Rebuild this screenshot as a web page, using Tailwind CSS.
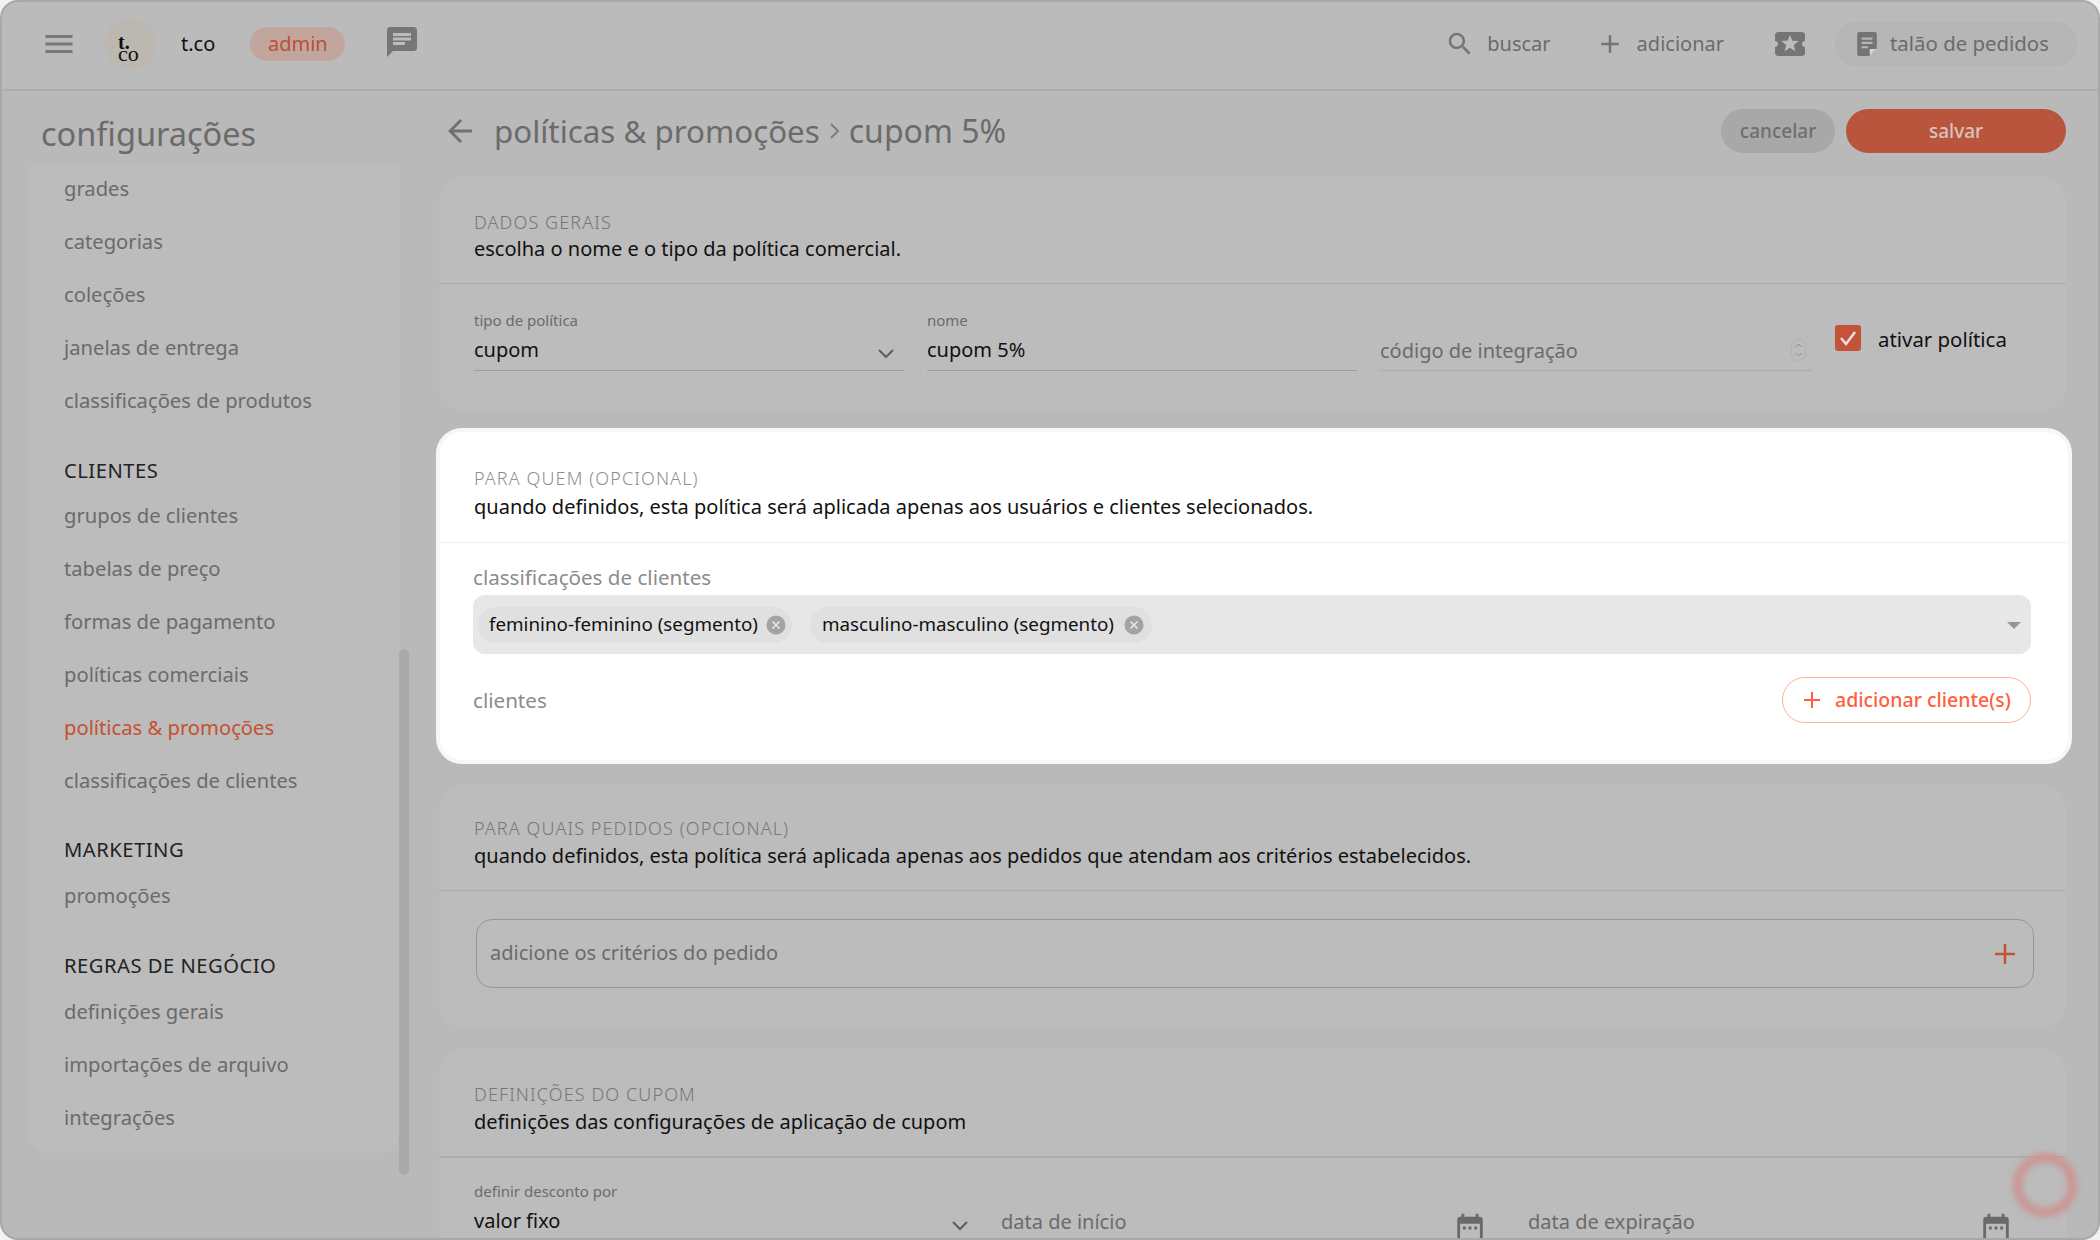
<!DOCTYPE html>
<html lang="pt">
<head>
<meta charset="UTF-8">
<title>políticas & promoções</title>
<script src="https://cdn.jsdelivr.net/npm/@tailwindcss/browser@4"></script>
</head>
<body class="bg-[#f2f2f2] font-['Noto_Sans',sans-serif]">
<div class="relative w-[2100px] h-[1240px] overflow-hidden rounded-[18px] border-2 border-[#a8a8a8] bg-[#b9b9b9] text-[20px] text-[#6b6b6b]">

  <!-- Header -->
  <header class="flex items-center h-[89px] border-b-2 border-[#adadad] bg-[#bbbbbb] pl-[42px] pr-[20px] pb-[4px]">
    <svg class="w-[36px] h-[36px] -ml-[3px] fill-[#787878]" viewBox="0 0 24 24"><path d="M3 18h18v-2H3v2zm0-5h18v-2H3v2zm0-7v2h18V6H3z"/></svg>
    <svg class="ml-[28px] w-[52px] h-[52px]" viewBox="0 0 52 52" font-family="Liberation Serif, serif" fill="#111">
      <circle cx="26" cy="26" r="26" fill="#bdb7b1"/>
      <text x="13" y="31" font-size="20" font-weight="700">t.</text>
      <text x="13" y="43" font-size="22">co</text>
    </svg>
    <span class="ml-[24px] text-[#111]">t.co</span>
    <span class="ml-[35px] flex items-center justify-center w-[95px] h-[34px] rounded-full bg-[#c2a69e] text-[#bd4f35]">admin</span>
    <svg class="ml-[39px] -mt-[4px] w-[36px] h-[36px] fill-[#767676]" viewBox="0 0 24 24"><path d="M20 2H4c-1.1 0-2 .9-2 2v18l4-4h14c1.1 0 2-.9 2-2V4c0-1.1-.9-2-2-2zM6 9h12v2H6V9zm8 5H6v-2h8v2zm4-6H6V6h12v2z"/></svg>

    <div class="ml-auto flex items-center">
      <svg class="w-[30px] h-[30px] fill-[#747474]" viewBox="0 0 24 24"><path d="M15.5 14h-.79l-.28-.27C15.41 12.59 16 11.11 16 9.5 16 5.91 13.09 3 9.5 3S3 5.91 3 9.5 5.91 16 9.5 16c1.61 0 3.09-.59 4.23-1.57l.27.28v.79l5 4.99L20.49 19l-4.99-5zm-6 0C7.01 14 5 11.99 5 9.5S7.01 5 9.5 5 14 7.01 14 9.5 11.99 14 9.5 14z"/></svg>
      <span class="ml-[12px]">buscar</span>
      <svg class="ml-[44px] w-[30px] h-[30px] fill-[#747474]" viewBox="0 0 24 24"><path d="M19 13h-6v6h-2v-6H5v-2h6V5h2v6h6v2z"/></svg>
      <span class="ml-[12px]">adicionar</span>
      <svg class="ml-[48px] w-[36px] h-[36px] fill-[#757575]" viewBox="0 0 24 24"><path d="M20 12c0-1.1.9-2 2-2V6c0-1.1-.9-2-2-2H4c-1.1 0-1.99.9-1.99 2v4c1.1 0 1.99.9 1.99 2s-.89 2-2 2v4c0 1.1.9 2 2 2h16c1.1 0 2-.9 2-2v-4c-1.1 0-2-.9-2-2zm-4.42 4.8L12 14.5l-3.58 2.3 1.08-4.12-3.29-2.69 4.24-.25L12 5.8l1.54 3.95 4.24.25-3.29 2.69 1.09 4.11z"/></svg>
      <div class="ml-[27px] flex items-center w-[243px] h-[46px] rounded-full bg-[#b6b6b6] pl-[20px]">
        <svg class="w-[24px] h-[24px] fill-[#747474]" viewBox="0 0 18 22"><path fill-rule="evenodd" d="M2 0h14a2 2 0 0 1 2 2v13l-7 7H2a2 2 0 0 1-2-2V2a2 2 0 0 1 2-2zm2 5v2h10V5H4zm0 4v2h10V9H4zm0 4v2h6v-2H4z"/><polygon points="11.5,21.5 11.5,15.5 17.5,15.5" fill="#d4d4d4"/></svg>
        <span class="ml-[11px] text-[20.4px]">talão de pedidos</span>
      </div>
    </div>
  </header>

  <div class="flex">
    <!-- Sidebar -->
    <aside class="relative w-[437px] shrink-0 pl-[27px]">
      <h1 class="h-[75px] pl-[12px] pt-[20px] text-[32.5px] leading-[46px]">configurações</h1>
      <nav class="w-[370px] h-[987px] overflow-hidden rounded-b-[18px] bg-[#bcbcbc] pl-[35px] text-[20.2px]">
        <ul class="-mt-[4px]">
          <li class="h-[53px] flex items-center">grades</li>
          <li class="h-[53px] flex items-center">categorias</li>
          <li class="h-[53px] flex items-center">coleções</li>
          <li class="h-[53px] flex items-center">janelas de entrega</li>
          <li class="h-[53px] flex items-center">classificações de produtos</li>
          <li class="h-[62px] pt-[31px] leading-[24px] tracking-[0.5px] text-[#222]">CLIENTES</li>
          <li class="h-[53px] flex items-center">grupos de clientes</li>
          <li class="h-[53px] flex items-center">tabelas de preço</li>
          <li class="h-[53px] flex items-center">formas de pagamento</li>
          <li class="h-[53px] flex items-center">políticas comerciais</li>
          <li class="h-[53px] flex items-center text-[#c4512f]">políticas & promoções</li>
          <li class="h-[53px] flex items-center">classificações de clientes</li>
          <li class="h-[62px] pt-[30px] leading-[24px] tracking-[0.5px] text-[#222]">MARKETING</li>
          <li class="h-[53px] flex items-center">promoções</li>
          <li class="h-[63px] pt-[31px] leading-[24px] tracking-[0.5px] text-[#222]">REGRAS DE NEGÓCIO</li>
          <li class="h-[53px] flex items-center">definições gerais</li>
          <li class="h-[53px] flex items-center">importações de arquivo</li>
          <li class="h-[53px] flex items-center">integrações</li>
        </ul>
      </nav>
      <div class="absolute left-[397px] top-[558px] w-[10px] h-[526px] rounded-full bg-[#a9a9a9]"></div>
    </aside>

    <!-- Main -->
    <main class="w-[1627px] shrink-0">
      <div class="flex items-center h-[44px] mt-[18px] mb-[24px]">
        <svg class="ml-[3px] w-[36px] h-[36px] fill-[#717171]" viewBox="0 0 24 24"><path d="M20 11H7.83l5.59-5.59L12 4l-8 8 8 8 1.41-1.41L7.83 13H20v-2z"/></svg>
        <span class="ml-[16px] text-[31.3px]">políticas & promoções</span>
        <svg class="ml-[7px] w-[16px] h-[20px] stroke-[#7c7c7c] fill-none stroke-2" viewBox="0 0 16 20"><path d="M4 3l7 7-7 7"/></svg>
        <span class="ml-[6px] text-[32px]">cupom 5%</span>
        <button class="ml-auto w-[114px] h-[44px] rounded-full bg-[#a8a8a8] text-[19px] text-[#6e6e6e] font-medium">cancelar</button>
        <button class="ml-[11px] w-[220px] h-[44px] rounded-full bg-[#b9553d] text-[19px] text-[#d8c4be] font-medium">salvar</button>
      </div>

      <!-- Dados gerais -->
      <section class="h-[233px] rounded-[24px] bg-[#bcbcbc]">
        <div class="h-[107px] pt-[33px] pl-[35px] pr-[34px] border-b border-[#adadad]">
          <h2 class="text-[18px] leading-[24px] tracking-[1.1px] font-light text-[#777]">DADOS GERAIS</h2>
          <p class="leading-[30px] text-[#111]">escolha o nome e o tipo da política comercial.</p>
        </div>
        <div class="flex gap-[23px] pl-[35px] pt-[26px]">
          <div class="w-[430px]">
            <div class="text-[15px] leading-[20px]">tipo de política</div>
            <div class="flex items-center justify-between h-[41px] border-b border-[#9d9d9d] text-[#111] pr-[8px]">cupom
              <svg class="mt-[8px] w-[20px] h-[12px] stroke-[#5e5e5e] fill-none stroke-2" viewBox="0 0 20 12"><path d="M3 2l7 7 7-7"/></svg>
            </div>
          </div>
          <div class="w-[430px]">
            <div class="text-[15px] leading-[20px]">nome</div>
            <div class="flex items-center h-[41px] border-b border-[#9d9d9d] text-[#111]">cupom 5%</div>
          </div>
          <div class="w-[431px] pt-[20px]">
            <div class="flex items-center justify-between h-[41px] border-b border-dotted border-[#9d9d9d] pr-[5px]"><span class="mt-[2px]">código de integração</span>
              <svg class="w-[15px] h-[22px] stroke-[#8a8a8a] fill-none" viewBox="0 0 15 22"><rect x="0.5" y="0.5" width="14" height="21" rx="7" stroke="#b0b0b0"/><path d="M4.5 8l3-3 3 3M4.5 14l3 3 3-3"/></svg>
            </div>
          </div>
          <div class="flex items-start pt-[15px] pl-[1px]">
            <span class="flex items-center justify-center w-[26px] h-[26px] rounded-[3px] bg-[#c5533a]">
              <svg class="w-[20px] h-[20px] stroke-[#e8e0dd] fill-none stroke-[2.5]" viewBox="0 0 20 20"><path d="M3 10l5 6 9-12"/></svg>
            </span>
            <span class="ml-[17px] text-[#111] text-[20.4px] leading-[28px]">ativar política</span>
          </div>
        </div>
      </section>

      <!-- Para quem: bloco em destaque -->
      <section class="relative -mx-[3px] w-[1636px] h-[336px] mt-[18px] rounded-[26px] border-4 border-[#f7f7f7] bg-white text-[#8c8c8c]">
        <div class="h-[111px] pt-[34px] pl-[34px] pr-[33px] border-b border-[#efefef]">
          <h2 class="text-[18px] leading-[24px] tracking-[1.1px] font-light text-[#8f8f8f]">PARA QUEM (OPCIONAL)</h2>
          <p class="leading-[34px] text-[#111]">quando definidos, esta política será aplicada apenas aos usuários e clientes selecionados.</p>
        </div>
        <div class="pl-[33px] pr-[37px] pt-[22px]">
          <div class="text-[20.6px] leading-[24px] mb-[6px]">classificações de clientes</div>
          <div class="flex items-center gap-[18px] h-[59px] rounded-[12px] bg-[#e7e7e7] pl-[5px] pr-[10px] text-[18.8px] text-[#111]">
            <span class="flex items-center justify-between w-[314px] h-[36px] rounded-full bg-[#e0e0e0] pl-[11px] pr-[6px]">feminino-feminino (segmento)
              <svg class="w-[20px] h-[20px]" viewBox="0 0 20 20"><circle cx="10" cy="10" r="9.5" fill="#a3a3a3"/><path d="M6.5 6.5l7 7m0-7l-7 7" stroke="#e8e8e8" stroke-width="1.6"/></svg>
            </span>
            <span class="flex items-center justify-between w-[342px] h-[36px] rounded-full bg-[#e0e0e0] pl-[12px] pr-[8px]">masculino-masculino (segmento)
              <svg class="w-[20px] h-[20px]" viewBox="0 0 20 20"><circle cx="10" cy="10" r="9.5" fill="#a3a3a3"/><path d="M6.5 6.5l7 7m0-7l-7 7" stroke="#e8e8e8" stroke-width="1.6"/></svg>
            </span>
            <span class="ml-auto mt-[2px] w-0 h-0 border-x-[7px] border-x-transparent border-t-[7px] border-t-[#969696]"></span>
          </div>
          <div class="flex items-center justify-between mt-[23px]">
            <span class="text-[20.6px] mt-[1px]">clientes</span>
            <button class="flex items-center w-[249px] h-[46px] rounded-full border-[1.5px] border-[#ffae98] pl-[17px] text-[19.5px] font-medium text-[#ff5f3d]">
              <svg class="w-[24px] h-[24px] fill-[#ff5f3d]" viewBox="0 0 24 24"><path d="M20 13h-7v7h-2v-7H4v-2h7V4h2v7h7v2z"/></svg>
              <span class="ml-[11px]">adicionar cliente(s)</span>
            </button>
          </div>
        </div>
      </section>

      <!-- Para quais pedidos -->
      <section class="h-[242px] mt-[21px] rounded-[24px] bg-[#bcbcbc]">
        <div class="h-[106px] pt-[31px] pl-[35px] pr-[34px] border-b border-[#adadad]">
          <h2 class="text-[18px] leading-[24px] tracking-[1.1px] font-light text-[#777]">PARA QUAIS PEDIDOS (OPCIONAL)</h2>
          <p class="leading-[32px] text-[#111]">quando definidos, esta política será aplicada apenas aos pedidos que atendam aos critérios estabelecidos.</p>
        </div>
        <div class="flex items-center justify-between w-[1558px] h-[69px] mt-[28px] ml-[37px] rounded-[16px] border-[1.5px] border-[#969696] pl-[13px] pr-[13px]">
          <span class="-mt-[1px]">adicione os critérios do pedido</span>
          <svg class="w-[30px] h-[30px] fill-[#c4512f]" viewBox="0 0 24 24"><path d="M20 13h-7v7h-2v-7H4v-2h7V4h2v7h7v2z"/></svg>
        </div>
      </section>

      <!-- Definições do cupom -->
      <section class="h-[260px] mt-[22px] rounded-t-[24px] bg-[#bcbcbc]">
        <div class="h-[109px] pt-[33px] pl-[35px] pr-[34px] border-b-2 border-[#adadad]">
          <h2 class="text-[18px] leading-[24px] tracking-[1.1px] font-light text-[#777]">DEFINIÇÕES DO CUPOM</h2>
          <p class="leading-[32px] text-[#111]">definições das configurações de aplicação de cupom</p>
        </div>
        <div class="flex gap-[24px] pl-[35px] pt-[23px]">
          <div class="w-[503px]">
            <div class="text-[15px] leading-[20px]">definir desconto por</div>
            <div class="flex items-center justify-between h-[39px] text-[#111] pr-[7px]">valor fixo
              <svg class="mt-[10px] w-[20px] h-[12px] stroke-[#5e5e5e] fill-none stroke-2" viewBox="0 0 20 12"><path d="M3 2l7 7 7-7"/></svg>
            </div>
          </div>
          <div class="w-[503px] pt-[22px]">
            <div class="flex items-center justify-between h-[38px] pr-[17px]">data de início
              <svg class="mt-[12px] w-[34px] h-[34px] fill-[#696969]" viewBox="0 0 24 24"><path d="M9 11H7v2h2v-2zm4 0h-2v2h2v-2zm4 0h-2v2h2v-2zm2-7h-1V2h-2v2H8V2H6v2H5c-1.11 0-1.99.9-1.99 2L3 20c0 1.1.89 2 2 2h14c1.1 0 2-.9 2-2V6c0-1.1-.9-2-2-2zm0 16H5V9h14v11z"/></svg>
            </div>
          </div>
          <div class="w-[503px] pt-[22px]">
            <div class="flex items-center justify-between h-[38px] pr-[18px]">data de expiração
              <svg class="mt-[12px] w-[34px] h-[34px] fill-[#696969]" viewBox="0 0 24 24"><path d="M9 11H7v2h2v-2zm4 0h-2v2h2v-2zm4 0h-2v2h2v-2zm2-7h-1V2h-2v2H8V2H6v2H5c-1.11 0-1.99.9-1.99 2L3 20c0 1.1.89 2 2 2h14c1.1 0 2-.9 2-2V6c0-1.1-.9-2-2-2zm0 16H5V9h14v11z"/></svg>
            </div>
          </div>
        </div>
      </section>
    </main>
  </div>

  <!-- Botão de ajuda flutuante -->
  <div class="absolute left-[2011px] top-[1151px] w-[64px] h-[64px] rounded-full border-[9px] border-[#cb9492] blur-[3px]"></div>
</div>
</body>
</html>
